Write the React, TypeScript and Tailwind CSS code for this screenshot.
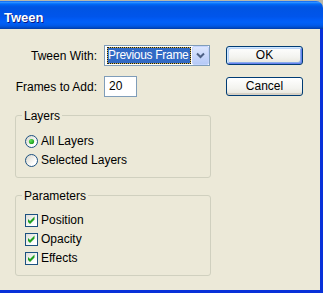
import React from "react";

function Radio({ checked, id }: { checked?: boolean; id: string }) {
  return (
    <svg width="13" height="13" viewBox="0 0 13 13" className="shrink-0">
      <defs>
        <linearGradient id={id} x1="0" y1="0" x2="1" y2="1">
          <stop offset="0" stopColor="#d4d2c6" />
          <stop offset="0.7" stopColor="#ffffff" />
          <stop offset="1" stopColor="#ffffff" />
        </linearGradient>
        <radialGradient id={id + "d"} cx="0.35" cy="0.35" r="0.7">
          <stop offset="0" stopColor="#5fe15b" />
          <stop offset="1" stopColor="#1a9a1a" />
        </radialGradient>
      </defs>
      <circle cx="6.5" cy="6.5" r="6" fill={`url(#${id})`} stroke="#1c5180" strokeWidth="1" />
      {checked && <circle cx="6.5" cy="6.5" r="2.6" fill={`url(#${id}d)`} />}
    </svg>
  );
}

function Check({ id }: { id: string }) {
  return (
    <svg width="13" height="13" viewBox="0 0 13 13" className="shrink-0">
      <defs>
        <linearGradient id={id} x1="0" y1="0" x2="1" y2="1">
          <stop offset="0" stopColor="#dcdcd7" />
          <stop offset="0.75" stopColor="#ffffff" />
          <stop offset="1" stopColor="#ffffff" />
        </linearGradient>
      </defs>
      <rect x="0.5" y="0.5" width="12" height="12" fill={`url(#${id})`} stroke="#1c5180" />
      <path d="M3 5 L5 7 L9.5 2.5 L9.5 5.5 L5 10 L3 8 Z" fill="#21a121" />
    </svg>
  );
}

function Group({ title, children }: { title: string; children: React.ReactNode }) {
  return (
    <div className="ml-[15px] w-[196px] border border-[#d0d0bf] rounded-[3px] pb-[7px]">
      <div className="-mt-[7px] ml-[6px] px-[2px] w-fit h-[14px] leading-[14px] bg-[#ece9d8]">{title}</div>
      {children}
    </div>
  );
}

export default function App() {
  return (
    <div className="w-[323px] h-[293px] bg-[#b9b7aa] overflow-hidden font-['Liberation_Sans',Arial,sans-serif] text-[12px] text-black">
      <div className="mt-[1px] h-[292px] flex flex-col">
        <div className="h-[28px] shrink-0 rounded-tr-[7px] pl-[4px] pt-[9px] bg-[linear-gradient(to_bottom,#0058ee_0%,#3593ff_4%,#288eff_6%,#127dff_8%,#036ffc_10%,#0262ee_14%,#0057e5_20%,#0054e3_24%,#0055eb_56%,#005bf5_66%,#0060f8_76%,#005aed_86%,#0052d6_92%,#0046c0_96%,#003ca8_100%)]">
          <div className="font-bold text-[13px] leading-[15px] text-white [text-shadow:1px_1px_0_#0a1883]">Tween</div>
        </div>
        <div className="flex-1 flex bg-[#ece9d8] border-r-[3px] border-b-[3px] border-[#0831d9]">
          <div className="w-[210px] pt-[16px]">
            <div className="flex items-center h-[21px]">
              <div className="w-[97px] text-right whitespace-nowrap">Tween With:</div>
              <div className="ml-[7px] w-[106px] h-[21px] border border-[#7f9db9] bg-white flex">
                <div className="ml-[2px] my-[1px] w-[84px] bg-[#ceb654] flex">
                  <div className="flex-1 border border-dotted border-[#1a1a1a] bg-[#316ac5] bg-clip-padding text-white leading-[15px] tracking-[-0.3px] whitespace-nowrap overflow-hidden">
                    Previous Frame
                  </div>
                </div>
                <div className="ml-[1px] w-[17px] h-[19px] rounded-[2px] border border-[#c3d3fd] bg-[linear-gradient(to_bottom,#dce6fd,#b6caf7)] flex items-center justify-center">
                  <svg width="9" height="7" viewBox="0 0 9 7">
                    <path d="M1 1.5 L4.5 5 L8 1.5" fill="none" stroke="#4d6185" strokeWidth="2" />
                  </svg>
                </div>
              </div>
            </div>
            <div className="flex items-center h-[21px] mt-[10px]">
              <div className="w-[97px] text-right whitespace-nowrap">Frames to Add:</div>
              <div className="ml-[7px] w-[33px] h-[21px] border border-[#7f9db9] bg-white pl-[4px] leading-[19px]">20</div>
            </div>
            <div className="mt-[18px]">
              <Group title="Layers">
                <div className="mt-[9px] pl-[9px]">
                  <div className="flex items-center h-[19px] leading-[19px] gap-[3px]">
                    <Radio checked id="r1" />
                    <span>All Layers</span>
                  </div>
                  <div className="flex items-center h-[19px] leading-[19px] gap-[3px]">
                    <Radio id="r2" />
                    <span>Selected Layers</span>
                  </div>
                </div>
              </Group>
            </div>
            <div className="mt-[17px]">
              <Group title="Parameters">
                <div className="mt-[8px] pl-[9px]">
                  {["Position", "Opacity", "Effects"].map((t, i) => (
                    <div key={t} className="flex items-center h-[19px] leading-[19px] gap-[3px]">
                      <Check id={"c" + i} />
                      <span>{t}</span>
                    </div>
                  ))}
                </div>
              </Group>
            </div>
          </div>
          <div className="ml-[16px] pt-[17px] flex flex-col">
            <button className="w-[77px] h-[19px] rounded-[3px] border border-[#003c74] bg-[linear-gradient(to_bottom,#ffffff,#f3f3ef_60%,#e6e4da)] shadow-[inset_1px_1px_0_#cee7ff,inset_-1px_-1px_0_#6982ee,inset_2px_2px_0_#bcd4f6,inset_-2px_-2px_0_#89adeb] leading-[17px] text-center">
              OK
            </button>
            <button className="mt-[12px] w-[77px] h-[19px] rounded-[3px] border border-[#003c74] bg-[linear-gradient(to_bottom,#ffffff,#f3f3ef_60%,#e6e4da)] shadow-[inset_0_-2px_0_#d6d0c5] leading-[17px] text-center">
              Cancel
            </button>
          </div>
        </div>
      </div>
    </div>
  );
}
